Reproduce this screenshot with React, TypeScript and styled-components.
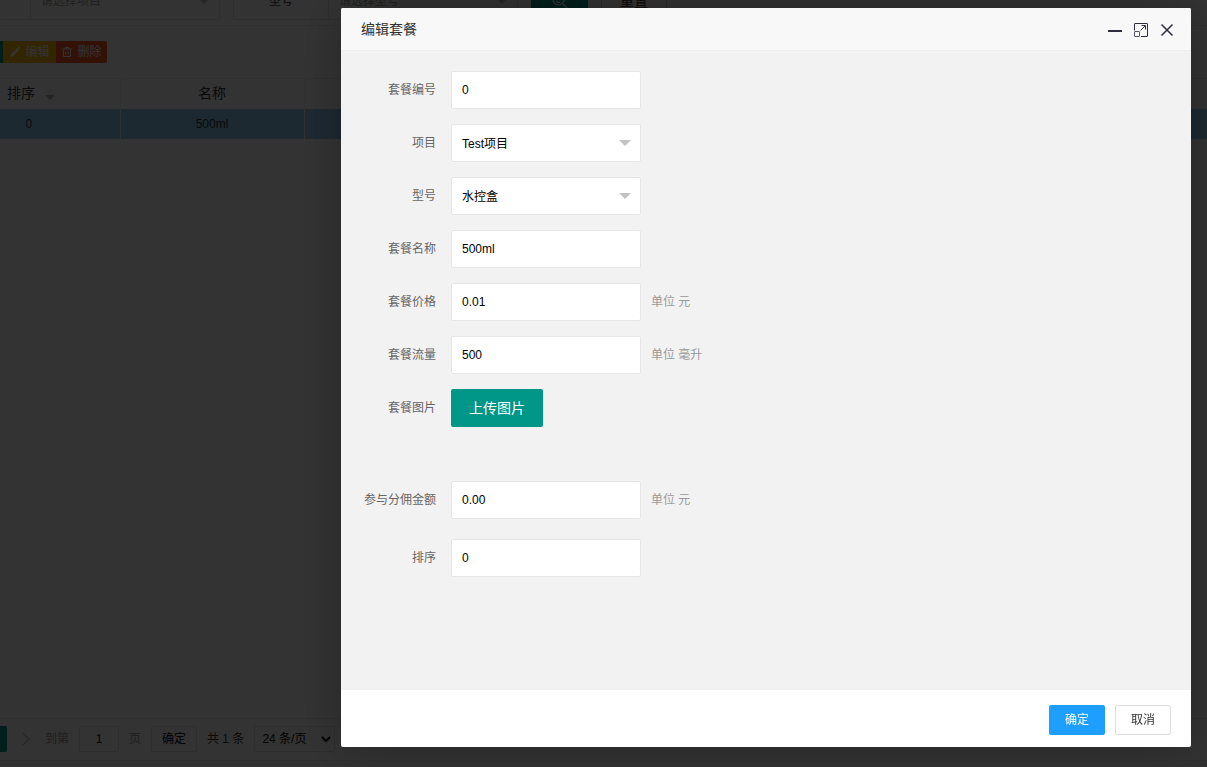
import React, { useState } from "react";
import styled, { createGlobalStyle } from "styled-components";

const GlobalStyle = createGlobalStyle`
  *, *::before, *::after { box-sizing: border-box; }
  html, body, #root { height: 100%; }
  body {
    margin: 0;
    overflow: hidden;
    background: #f2f2f2;
    color: #333;
    font: 12px/20px "Liberation Sans", "Noto Sans CJK SC", sans-serif;
  }
  button, input, select { font: inherit; margin: 0; }
`;

/* ---------- list page ---------- */

const Page = styled.div`
  display: flex;
  flex-direction: column;
  height: 100vh;
  background: #f2f2f2;
`;

const Card = styled.div`
  display: flex;
  flex-direction: column;
  flex: 1;
  min-height: 0;
  background: #fff;
`;

const SearchBar = styled.form`
  display: flex;
  align-items: flex-end;
  flex: none;
  height: 26px;
  padding-bottom: 5px;
  overflow: hidden;
  border-bottom: 1px solid #eee;
`;

const SearchGroup = styled.div<{ $cut?: boolean }>`
  display: flex;
  flex: none;
  margin-right: 13px;
  border: 1px solid #e6e6e6;
  border-left-width: ${(p) => (p.$cut ? 0 : 1)}px;
  border-radius: 2px;
`;

const SearchLabel = styled.label<{ $width: number }>`
  width: ${(p) => p.$width}px;
  height: 36px;
  line-height: 36px;
  text-align: center;
`;

const SearchSelectBox = styled.div`
  position: relative;
  width: 189px;
  height: 36px;
  border-left: 1px solid #e6e6e6;
`;

const SearchButton = styled.button<{ $primary?: boolean }>`
  display: flex;
  align-items: center;
  justify-content: center;
  flex: none;
  width: ${(p) => (p.$primary ? 57 : 66)}px;
  height: 38px;
  margin-right: 13px;
  padding: 0;
  font-size: 14px;
  border: 1px solid ${(p) => (p.$primary ? "#009688" : "#d2d2d2")};
  border-radius: 2px;
  background: ${(p) => (p.$primary ? "#009688" : "#fff")};
  color: ${(p) => (p.$primary ? "#fff" : "#333")};
`;

const PlainSelect = styled.select<{ $muted?: boolean }>`
  appearance: none;
  width: 100%;
  height: 100%;
  padding: ${(p) => (p.$muted ? "0 10px" : "2px 10px 0")};
  border: 0;
  border-radius: 2px;
  background: transparent;
  color: ${(p) => (p.$muted ? "#a0a0a0" : "#000")};
  outline: none;
`;

const CaretMark = styled.svg`
  position: absolute;
  top: 50%;
  right: 9px;
  margin-top: -3px;
  pointer-events: none;
`;

const Content = styled.div`
  display: flex;
  flex-direction: column;
  flex: 1;
  min-height: 0;
  padding-top: 15px;
`;

const Toolbar = styled.div`
  display: flex;
  flex: none;
  height: 22px;
  margin-bottom: 15px;
`;

const ToolButton = styled.button<{ $color: string; $width: number }>`
  display: flex;
  align-items: center;
  justify-content: center;
  gap: 4px;
  width: ${(p) => p.$width}px;
  padding: 0;
  overflow: hidden;
  border: 0;
  color: #fff;
  background: ${(p) => p.$color};

  &:last-child { border-radius: 0 2px 2px 0; }
`;

const DataTable = styled.table`
  width: 100%;
  table-layout: fixed;
  border-collapse: collapse;
  border-top: 1px solid #eee;
`;

const HeadCell = styled.th<{ $width?: number; $start?: boolean }>`
  width: ${(p) => (p.$width ? p.$width + "px" : "auto")};
  height: 30px;
  padding: 0 7px 2px;
  border-right: 1px solid #eee;
  font-size: 14px;
  font-weight: 400;
  text-align: ${(p) => (p.$start ? "left" : "center")};

  &:last-child { border-right: 0; }
`;

const HeadLabel = styled.span`
  display: inline-flex;
  align-items: center;
  gap: 10px;
`;

const SortMark = styled.svg`
  margin-top: 4px;
`;

const Cell = styled.td<{ $first?: boolean }>`
  height: 30px;
  padding: ${(p) => (p.$first ? "0 62px 0 0" : "0")};
  border-right: 1px solid #eee;
  background: #93cbf5;
  text-align: center;

  &:last-child { border-right: 0; }
`;

const Pager = styled.div`
  display: flex;
  align-items: center;
  flex: none;
  height: 43px;
  margin-top: auto;
  padding-bottom: 1px;
  border-top: 1px solid #e6e6e6;
  border-bottom: 1px solid #e6e6e6;
`;

const CurrentPage = styled.span`
  width: 7px;
  height: 26px;
  border-radius: 0 2px 2px 0;
  background: #009688;
`;

const NextButton = styled.button`
  display: flex;
  align-items: center;
  justify-content: center;
  width: 38px;
  height: 26px;
  padding: 0;
  border: 0;
  background: transparent;
  color: #c2c2c2;
`;

const PagerLabel = styled.label`
  display: flex;
  align-items: center;
  gap: 10px;
  color: #999;
`;

const PagerInput = styled.input`
  width: 40px;
  height: 26px;
  padding: 0;
  border: 1px solid #e2e2e2;
  border-radius: 2px;
  background: #fff;
  text-align: center;
`;

const PagerButton = styled.button`
  width: 46px;
  height: 26px;
  margin: 0 10px;
  padding: 0;
  border: 1px solid #e2e2e2;
  border-radius: 2px;
  background: #fff;
`;

const PagerSelect = styled.select`
  width: 81px;
  height: 26px;
  margin-left: 10px;
  padding: 0 3px;
  border: 1px solid #e2e2e2;
  border-radius: 2px;
  background: #fff;
  color: #000;
`;

const PageFoot = styled.div`
  flex: none;
  height: 6px;
  background: #f2f2f2;
`;

/* ---------- dialog ---------- */

const Shade = styled.div`
  position: fixed;
  inset: 0;
  display: flex;
  justify-content: flex-end;
  padding: 8px 16px 20px;
  background: rgba(0, 0, 0, 0.8);
`;

const Dialog = styled.section`
  display: flex;
  flex-direction: column;
  width: 850px;
  max-width: 100%;
  border-radius: 2px;
  background: #fff;
  box-shadow: 1px 1px 50px rgba(0, 0, 0, 0.3);
`;

const DialogHeader = styled.header`
  display: flex;
  align-items: center;
  justify-content: space-between;
  flex: none;
  height: 43px;
  padding: 0 16px 0 20px;
  border-bottom: 1px solid #eee;
  border-radius: 2px 2px 0 0;
  background: #f8f8f8;
`;

const DialogTitle = styled.h1`
  margin: 0;
  font-size: 14px;
  font-weight: 400;
`;

const WindowControls = styled.div`
  display: flex;
  gap: 10px;
  padding-top: 2px;
`;

const IconButton = styled.button`
  display: flex;
  width: 16px;
  height: 16px;
  padding: 0;
  border: 0;
  background: transparent;
  color: #2e2d3c;
`;

const DialogBody = styled.form`
  flex: 1;
  min-height: 0;
  padding: 20px 0;
  overflow: hidden;
  background: #f2f2f2;
`;

const FormRow = styled.div<{ $gap?: number }>`
  display: flex;
  margin-bottom: ${(p) => p.$gap ?? 15}px;
`;

const RowLabel = styled.label`
  width: 110px;
  padding: 9px 15px;
  color: #666;
  text-align: right;
`;

const Field = styled.div`
  position: relative;
  width: 190px;
  height: 38px;
  border: 1px solid #e6e6e6;
  border-radius: 2px;
  background: #fff;
`;

const TextInput = styled.input`
  width: 100%;
  height: 100%;
  padding: 0 10px;
  border: 0;
  background: transparent;
  color: #000;
  outline: none;
`;

const Unit = styled.span`
  padding: 9px 10px;
  color: #999;
`;

const UploadButton = styled.button`
  height: 38px;
  padding: 0 18px;
  border: 0;
  border-radius: 2px;
  background: #009688;
  color: #fff;
  font-size: 14px;
`;

const DialogFooter = styled.footer`
  display: flex;
  align-items: center;
  justify-content: flex-end;
  gap: 10px;
  flex: none;
  height: 57px;
  padding: 3px 20px 0;
`;

const FooterButton = styled.button<{ $primary?: boolean }>`
  width: 56px;
  height: 30px;
  padding: 0;
  border: 1px solid ${(p) => (p.$primary ? "#1e9fff" : "#dedede")};
  border-radius: 2px;
  background: ${(p) => (p.$primary ? "#1e9fff" : "#fff")};
  color: ${(p) => (p.$primary ? "#fff" : "#333")};
`;

const Caret = () => (
  <CaretMark width="12" height="6" viewBox="0 0 12 6" aria-hidden="true">
    <path d="M0 0H12L6 6Z" fill="#c2c2c2" />
  </CaretMark>
);

const PencilIcon = () => (
  <svg width="12" height="12" viewBox="0 0 12 12" aria-hidden="true">
    <path d="M1 11 1.8 8.2 8 2 10 4 3.8 10.2ZM8.6 1.4 9.4.7Q10 .3 10.6.9L11.1 1.4Q11.7 2 11.2 2.6L10.6 3.4Z" fill="currentColor" />
  </svg>
);

const TrashIcon = () => (
  <svg width="12" height="12" viewBox="0 0 12 12" fill="none" stroke="currentColor" aria-hidden="true">
    <path d="M1 3H11M4 3V1.5H8V3M2.5 4V10.5H9.5V4M4.8 5.5V8.5M7.2 5.5V8.5" />
  </svg>
);

const SearchIcon = () => (
  <svg width="16" height="16" viewBox="0 0 16 16" fill="none" stroke="currentColor" strokeWidth="1.2" aria-hidden="true">
    <circle cx="6.5" cy="6.5" r="5.5" />
    <path d="M10.5 10.5 15 15M4 8A3.4 3.4 0 0 0 8.5 9" />
  </svg>
);

type FieldSpec = {
  id: string;
  label: string;
  value: string;
  select?: boolean;
  unit?: string;
  gap?: number;
};

const mainFields: FieldSpec[] = [
  { id: "code", label: "套餐编号", value: "0" },
  { id: "project", label: "项目", value: "Test项目", select: true },
  { id: "model", label: "型号", value: "水控盒", select: true },
  { id: "name", label: "套餐名称", value: "500ml" },
  { id: "price", label: "套餐价格", value: "0.01", unit: "单位 元" },
  { id: "flow", label: "套餐流量", value: "500", unit: "单位 毫升" },
];

const extraFields: FieldSpec[] = [
  { id: "commission", label: "参与分佣金额", value: "0.00", unit: "单位 元", gap: 20 },
  { id: "order", label: "排序", value: "0" },
];

function FormField({ id, label, value, select, unit, gap }: FieldSpec) {
  const [text, setText] = useState(value);
  return (
    <FormRow $gap={gap}>
      <RowLabel htmlFor={id}>{label}</RowLabel>
      <Field>
        {select ? (
          <>
            <PlainSelect id={id} value={text} onChange={(e) => setText(e.target.value)}>
              <option>{value}</option>
            </PlainSelect>
            <Caret />
          </>
        ) : (
          <TextInput id={id} value={text} onChange={(e) => setText(e.target.value)} />
        )}
      </Field>
      {unit && <Unit>{unit}</Unit>}
    </FormRow>
  );
}

export default function App() {
  return (
    <>
      <GlobalStyle />
      <Page>
        <Card>
          <SearchBar>
            <SearchGroup $cut>
              <SearchLabel $width={30} htmlFor="search-project" aria-label="项目" />
              <SearchSelectBox>
                <PlainSelect id="search-project" $muted>
                  <option>请选择项目</option>
                </PlainSelect>
                <Caret />
              </SearchSelectBox>
            </SearchGroup>
            <SearchGroup>
              <SearchLabel $width={94} htmlFor="search-model">型号</SearchLabel>
              <SearchSelectBox>
                <PlainSelect id="search-model" $muted>
                  <option>请选择型号</option>
                </PlainSelect>
                <Caret />
              </SearchSelectBox>
            </SearchGroup>
            <SearchButton type="button" $primary aria-label="搜索"><SearchIcon /></SearchButton>
            <SearchButton type="button">重置</SearchButton>
          </SearchBar>
          <Content>
            <Toolbar>
              <ToolButton type="button" $color="#009688" $width={3} aria-label="添加" />
              <ToolButton type="button" $color="#ffb800" $width={53}><PencilIcon />编辑</ToolButton>
              <ToolButton type="button" $color="#ff5722" $width={51}><TrashIcon />删除</ToolButton>
            </Toolbar>
            <DataTable>
              <thead>
                <tr>
                  <HeadCell $width={120} $start>
                    <HeadLabel>
                      排序
                      <SortMark width="10" height="14" viewBox="0 0 10 14" aria-hidden="true">
                        <path d="M0 5H10L5 0Z" fill="#f2f2f2" />
                        <path d="M0 7H10L5 12Z" fill="#b2b2b2" />
                      </SortMark>
                    </HeadLabel>
                  </HeadCell>
                  <HeadCell $width={184}>名称</HeadCell>
                  <HeadCell />
                </tr>
              </thead>
              <tbody>
                <tr>
                  <Cell $first>0</Cell>
                  <Cell>500ml</Cell>
                  <Cell />
                </tr>
              </tbody>
            </DataTable>
            <Pager>
              <CurrentPage />
              <NextButton type="button" aria-label="下一页">
                <svg width="8" height="14" viewBox="0 0 8 14" fill="none" stroke="currentColor" strokeWidth="1.5" aria-hidden="true">
                  <path d="M1 1 7 7 1 13" />
                </svg>
              </NextButton>
              <PagerLabel>
                到第
                <PagerInput defaultValue="1" />
                页
              </PagerLabel>
              <PagerButton type="button">确定</PagerButton>
              <span>共 1 条</span>
              <PagerSelect aria-label="每页条数">
                <option>24 条/页</option>
              </PagerSelect>
            </Pager>
          </Content>
        </Card>
        <PageFoot />
      </Page>

      <Shade>
        <Dialog role="dialog" aria-labelledby="dialog-title">
          <DialogHeader>
            <DialogTitle id="dialog-title">编辑套餐</DialogTitle>
            <WindowControls>
              <IconButton type="button" aria-label="最小化">
                <svg width="16" height="16" viewBox="0 0 16 16" aria-hidden="true">
                  <path d="M1 8H15V10H1Z" fill="currentColor" />
                </svg>
              </IconButton>
              <IconButton type="button" aria-label="最大化">
                <svg width="16" height="16" viewBox="0 0 16 16" fill="none" stroke="currentColor" aria-hidden="true">
                  <path d="M1.5 8.5V2Q1.5 1.5 2 1.5H14Q14.5 1.5 14.5 2V14Q14.5 14.5 14 14.5H8" />
                  <path d="M1.5 10Q1.5 9.5 2 9.5H6Q6.5 9.5 6.5 10V14Q6.5 14.5 6 14.5H2Q1.5 14.5 1.5 14Z" strokeOpacity="0.8" />
                  <path d="M7.5 8.5 12 4M8.5 3.5H12.5V7.5" />
                </svg>
              </IconButton>
              <IconButton type="button" aria-label="关闭">
                <svg width="16" height="16" viewBox="0 0 16 16" fill="none" stroke="currentColor" strokeWidth="1.5" aria-hidden="true">
                  <path d="M2.5 2.5 13.5 13.5M13.5 2.5 2.5 13.5" />
                </svg>
              </IconButton>
            </WindowControls>
          </DialogHeader>
          <DialogBody>
            {mainFields.map((f) => (
              <FormField key={f.id} {...f} />
            ))}
            <FormRow $gap={54}>
              <RowLabel htmlFor="upload">套餐图片</RowLabel>
              <UploadButton id="upload" type="button">上传图片</UploadButton>
            </FormRow>
            {extraFields.map((f) => (
              <FormField key={f.id} {...f} />
            ))}
          </DialogBody>
          <DialogFooter>
            <FooterButton type="button" $primary>确定</FooterButton>
            <FooterButton type="button">取消</FooterButton>
          </DialogFooter>
        </Dialog>
      </Shade>
    </>
  );
}
